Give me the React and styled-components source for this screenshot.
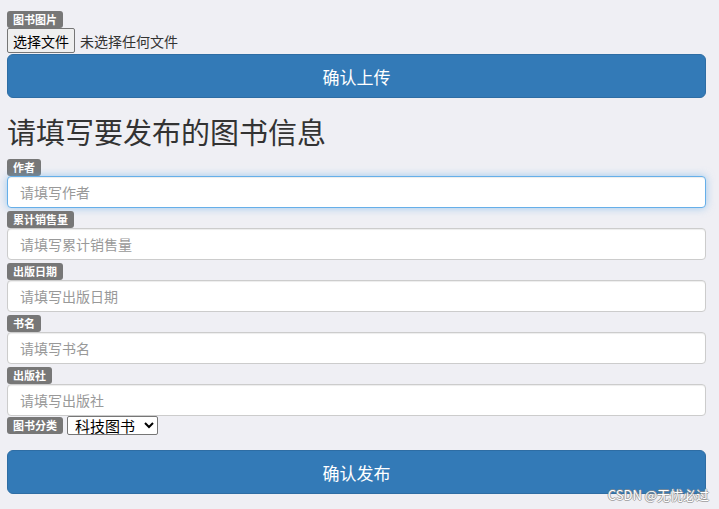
import React from "react";
import styled, { createGlobalStyle } from "styled-components";

const GlobalStyle = createGlobalStyle`
  html, body {
    margin: 0;
    padding: 0;
    background: #efeff4;
  }
  body {
    font-family: "Noto Sans CJK SC", "Noto Sans", sans-serif;
    color: #333;
  }
`;

// page wrapper
const Page = styled.div`
  position: relative;
  min-height: 509px;
  padding: 11px 13px 0 7px;
  box-sizing: border-box;
  display: flex;
  flex-direction: column;
  align-items: flex-start;
`;

const Label = styled.span`
  display: inline-block;
  height: 17px;
  line-height: 17px;
  padding: 0 6px;
  background: #777;
  color: #fff;
  font-size: 11px;
  font-weight: 700;
  border-radius: 3px;
  white-space: nowrap;
`;

const FileRow = styled.div`
  display: flex;
  align-items: center;
  gap: 5px;
  height: 25px;
  font-size: 14px;
`;

const FileButton = styled.span`
  display: inline-flex;
  align-items: center;
  justify-content: center;
  width: 68px;
  height: 25px;
  box-sizing: border-box;
  border: 1px solid #767676;
  border-radius: 2px;
  background: #efefef;
  color: #000;
  font-size: 14px;
`;

const FileHint = styled.span`
  color: #333;
`;

const BigButton = styled.button`
  width: 100%;
  height: 44px;
  margin-top: ${(p) => p.$top || 0}px;
  border: 1px solid #2e6da4;
  border-radius: 6px;
  background: #337ab7;
  color: #fff;
  font-family: inherit;
  font-size: 17px;
  cursor: pointer;
`;

const Heading = styled.h2`
  margin: 13px 0 8px;
  font-size: 29px;
  line-height: 40px;
  font-weight: 400;
  color: #333;
`;

const Field = styled.div`
  width: 100%;
  display: flex;
  flex-direction: column;
  align-items: flex-start;
  margin-bottom: 3px;
`;

const TextInput = styled.input`
  width: 100%;
  height: 32px;
  box-sizing: border-box;
  padding: 0 12px;
  border: 1px solid ${(p) => (p.$focus ? "#66afe9" : "#ccc")};
  border-radius: 4px;
  background: #fff;
  font-family: inherit;
  font-size: 14px;
  color: #555;
  outline: none;
  box-shadow: ${(p) =>
    p.$focus
      ? "inset 0 1px 1px rgba(0,0,0,.075), 0 0 8px rgba(102,175,233,.6)"
      : "inset 0 1px 1px rgba(0,0,0,.075)"};

  &::placeholder {
    color: #999;
  }
`;

const SelectRow = styled.div`
  display: flex;
  align-items: center;
  gap: 4px;
  margin-top: -3px;
`;

const Select = styled.select`
  width: 91px;
  height: 19px;
  box-sizing: border-box;
  padding: 0 0 0 3px;
  border: 1px solid #767676;
  border-radius: 2px;
  background: #fff;
  font-family: "Liberation Sans", "Noto Sans CJK SC", sans-serif;
  font-size: 15px;
  line-height: 17px;
  color: #000;
`;

const Watermark = styled.span`
  position: absolute;
  right: 10px;
  bottom: 5px;
  font-size: 13px;
  color: #fff;
  text-shadow: 1px 0 0 rgba(140, 140, 140, 0.7), -1px 0 0 rgba(140, 140, 140, 0.7),
    0 1px 0 rgba(140, 140, 140, 0.7), 0 -1px 0 rgba(140, 140, 140, 0.7);
`;

const fields = [
  { label: "作者", placeholder: "请填写作者", focus: true },
  { label: "累计销售量", placeholder: "请填写累计销售量" },
  { label: "出版日期", placeholder: "请填写出版日期" },
  { label: "书名", placeholder: "请填写书名" },
  { label: "出版社", placeholder: "请填写出版社" },
];

export default function App() {
  return (
    <>
      <GlobalStyle />
      <Page>
        <Label>图书图片</Label>
        <FileRow>
          <FileButton>选择文件</FileButton>
          <FileHint>未选择任何文件</FileHint>
        </FileRow>
        <BigButton $top={1}>确认上传</BigButton>

        <Heading>请填写要发布的图书信息</Heading>

        {fields.map((f) => (
          <Field key={f.label}>
            <Label>{f.label}</Label>
            <TextInput placeholder={f.placeholder} $focus={f.focus} />
          </Field>
        ))}

        <SelectRow>
          <Label>图书分类</Label>
          <Select defaultValue="科技图书">
            <option>科技图书</option>
            <option>文学图书</option>
            <option>历史图书</option>
          </Select>
        </SelectRow>

        <BigButton $top={15}>确认发布</BigButton>
        <Watermark>CSDN @无忧必过</Watermark>
      </Page>
    </>
  );
}
